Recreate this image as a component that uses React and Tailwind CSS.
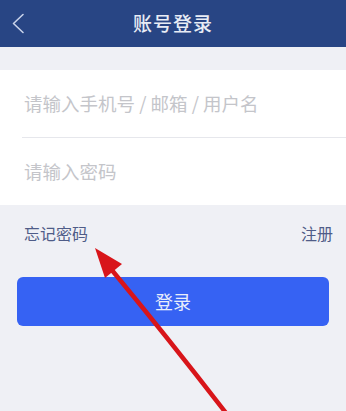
export default function App() {
  return (
    <div
      className="relative w-[346px] h-[411px] overflow-hidden bg-[#eff0f5]"
      style={{ fontFamily: '"Noto Sans CJK SC", "Noto Sans", sans-serif' }}
    >
      <div className="relative h-[47px] bg-[#284584] flex items-center justify-center">
        <svg className="absolute left-[11px] top-[13px]" width="14" height="21" viewBox="0 0 14 21" fill="none">
          <path d="M12 1.5 L2.5 10.5 L12 19.5" stroke="#c9d3ea" strokeWidth="1.6" strokeLinecap="round" strokeLinejoin="round" />
        </svg>
        <span className="text-[19px] text-[#e8ecf5] font-medium tracking-[1px]">账号登录</span>
      </div>

      <div className="mt-[23px] bg-white">
        <div className="h-[67px] flex items-center pl-[24px] text-[18.5px] text-[#c4c5ca]">
          请输入手机号 / 邮箱 / 用户名
        </div>
        <div className="ml-[22px] h-px bg-[#e6e7ec]" />
        <div className="h-[67px] flex items-center pl-[24px] text-[18.5px] text-[#c4c5ca]">
          请输入密码
        </div>
      </div>

      <div className="h-[56px] flex items-center justify-between px-[24px] pr-[13px] text-[16px] text-[#4f5c88]">
        <span>忘记密码</span>
        <span>注册</span>
      </div>

      <div className="mt-[16px] mx-[17px] h-[49px] rounded-md bg-[#3662f3] flex items-center justify-center">
        <span className="text-[18px] text-[#e8edfb]">登录</span>
      </div>

      <svg className="absolute left-0 top-0" width="346" height="411" viewBox="0 0 346 411">
        <path d="M226 413 Q168 338 111 269" stroke="#d8151a" strokeWidth="4.5" fill="none" strokeLinecap="round" />
        <polygon points="95,248 122,264 105,278" fill="#d8151a" />
      </svg>
    </div>
  );
}
